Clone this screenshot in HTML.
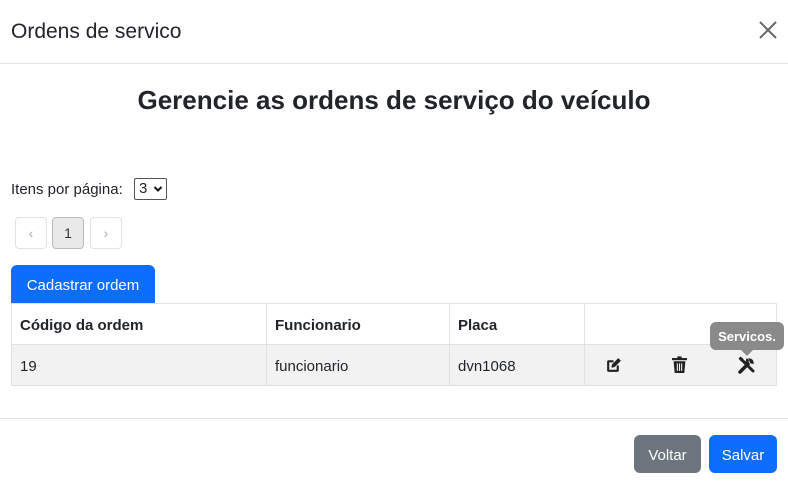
<!DOCTYPE html>
<html><head><meta charset="utf-8"><style>
*{box-sizing:border-box;margin:0;padding:0}
body{width:788px;height:481px;background:#fff;font-family:"Liberation Sans",sans-serif;color:#212529;position:relative;overflow:hidden}
.a{position:absolute}
.hdr{left:11px;top:20px;font-size:21px}
.close{left:758px;top:20px}
.line{left:0;width:788px;height:1px;background:#dee2e6}
h2{position:absolute;left:0;width:788px;text-align:center;top:85px;font-size:26px;font-weight:600}
.pg{width:32px;height:32px;border:1px solid #dee2e6;border-radius:4px;top:217px;text-align:center;line-height:30px;font-size:14px;color:#aaa}
.btn{color:#fff;border-radius:6px;font-size:15px;text-align:center;padding-top:3px}
table{position:absolute;left:11px;top:303px;width:766px;border-collapse:collapse;font-size:15px}
td,th{border:1px solid #dee2e6;height:41px;padding:3px 8px 0;text-align:left;vertical-align:middle}
th{font-weight:bold}
tr.b td{background:#f2f2f2}
</style></head><body>
<div class="a hdr">Ordens de servico</div>
<svg class="a close" width="20" height="20" viewBox="0 0 20 20"><path d="M2 2L18 18M18 2L2 18" stroke="#666" stroke-width="2"/></svg>
<div class="a line" style="top:63px"></div>
<h2>Gerencie as ordens de serviço do veículo</h2>
<div class="a" style="left:11px;top:181px;font-size:15px">Itens por página:</div>
<div class="a" style="left:134px;top:178px;width:33px;height:22px;border:1px solid #555;border-radius:2px;font-size:15px;padding:1px 0 0 4px">3<svg style="position:absolute;left:18px;top:6px" width="10" height="8" viewBox="0 0 10 8"><path d="M1.5 2L5 5.5 8.5 2" stroke="#111" stroke-width="2" fill="none"/></svg></div>
<div class="a pg" style="left:15px">&#8249;</div>
<div class="a pg" style="left:52px;background:#e9e9e9;border-color:#bbb;color:#333">1</div>
<div class="a pg" style="left:90px">&#8250;</div>
<div class="a btn" style="left:11px;top:265px;width:144px;height:38px;line-height:35px;background:#0d6efd;border-radius:6px 6px 0 0">Cadastrar ordem</div>
<table>
<colgroup><col style="width:255px"><col style="width:183px"><col style="width:135px"><col></colgroup>
<tr><th>Código da ordem</th><th>Funcionario</th><th>Placa</th><th></th></tr>
<tr class="b"><td>19</td><td>funcionario</td><td>dvn1068</td><td></td></tr>
</table>
<svg class="a" style="left:605px;top:357px" width="17" height="17" viewBox="0 0 16 16"><path d="M3 3h5v2H4v7h7V8h2v4.5a1.5 1.5 0 0 1-1.5 1.5h-8A1.5 1.5 0 0 1 2 12.5v-8A1.5 1.5 0 0 1 3 3z" fill="#222"/><path d="M6 10l0.5-3L12.5 1 15 3.5 9 9.5z" fill="#222"/></svg>
<svg class="a" style="left:672px;top:356px" width="15" height="18" viewBox="0 0 14 16"><rect x="0" y="1.5" width="14" height="2" fill="#222"/><rect x="5" y="0" width="4" height="2" fill="#222"/><path d="M1.5 4.5h11l-1 11h-9z" fill="#222"/><path d="M5 6.5v7M7 6.5v7M9 6.5v7" stroke="#f2f2f2" stroke-width="1"/></svg>
<svg class="a" style="left:737px;top:355px" width="20" height="20" viewBox="0 0 20 20"><path d="M3 17L11 9" stroke="#222" stroke-width="3.5" stroke-linecap="round"/><path d="M11 3.5a4.5 4.5 0 0 1 5.5 5.5l-2.5-.5-1.5-1.5-.5-2.5z" fill="#222"/><path d="M11 9a4 4 0 0 1 0-5" stroke="#222" stroke-width="3" fill="none"/><path d="M5 5L16 16" stroke="#222" stroke-width="3" stroke-linecap="round"/><path d="M1.5 3.5L3.5 1.5 6.5 4 4 6.5z" fill="#222"/></svg>
<div class="a" style="left:710px;top:322px;width:74px;height:28px;background:#8a8a8a;border-radius:6px;color:#fff;font-weight:bold;font-size:13px;text-align:center;line-height:30px">Servicos.</div>
<div class="a" style="left:741px;top:350px;width:0;height:0;border-left:6px solid transparent;border-right:6px solid transparent;border-top:6px solid #8a8a8a"></div>
<div class="a line" style="top:418px"></div>
<div class="a btn" style="left:634px;top:435px;width:67px;height:38px;line-height:35px;background:#6c757d">Voltar</div>
<div class="a btn" style="left:709px;top:435px;width:68px;height:38px;line-height:35px;background:#0d6efd">Salvar</div>
</body></html>
